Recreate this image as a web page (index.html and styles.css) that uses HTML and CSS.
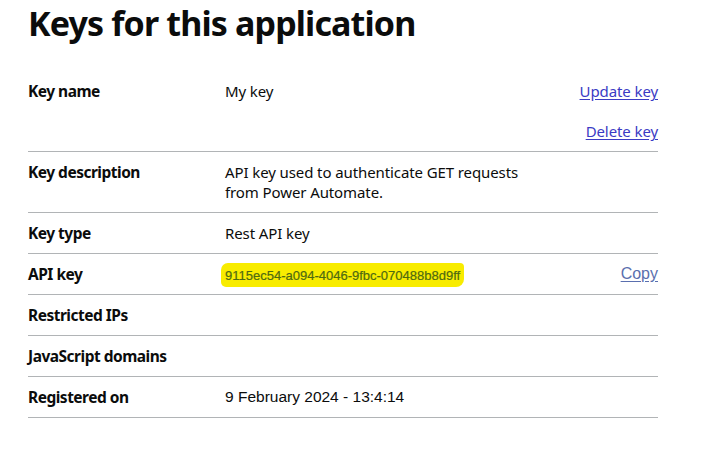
FILE: index.html
```html
<!DOCTYPE html>
<html lang="en">
<head>
<meta charset="utf-8">
<title>Keys for this application</title>
<link rel="stylesheet" href="styles.css">
</head>
<body>
<main class="page">
  <h1 class="title">Keys for this application</h1>
  <dl class="summary">
    <div class="row">
      <dt class="key">Key name</dt>
      <dd class="value">My key</dd>
      <dd class="actions">
        <a class="link" href="#">Update key</a>
        <a class="link" href="#">Delete key</a>
      </dd>
    </div>
    <div class="row">
      <dt class="key">Key description</dt>
      <dd class="value">API key used to authenticate GET requests from Power Automate.</dd>
      <dd class="actions"></dd>
    </div>
    <div class="row">
      <dt class="key">Key type</dt>
      <dd class="value">Rest API key</dd>
      <dd class="actions"></dd>
    </div>
    <div class="row">
      <dt class="key">API key</dt>
      <dd class="value"><span class="apikey">9115ec54-a094-4046-9fbc-070488b8d9ff</span></dd>
      <dd class="actions"><a class="copy" href="#">Copy</a></dd>
    </div>
    <div class="row">
      <dt class="key">Restricted IPs</dt>
      <dd class="value"></dd>
      <dd class="actions"></dd>
    </div>
    <div class="row">
      <dt class="key">JavaScript domains</dt>
      <dd class="value"></dd>
      <dd class="actions"></dd>
    </div>
    <div class="row">
      <dt class="key">Registered on</dt>
      <dd class="value date">9 February 2024 - 13:4:14</dd>
      <dd class="actions"></dd>
    </div>
  </dl>
</main>
</body>
</html>
```

FILE: styles.css
```css
html, body {
  margin: 0;
  padding: 0;
  background: #ffffff;
}

body {
  font-family: "Noto Sans", "Open Sans", Arial, sans-serif;
  color: #0b0c0c;
}

.page {
  padding: 0 50px 0 28px;
  width: 630px;
}

.title {
  margin: 0 0 27px 0;
  padding-top: 2px;
  font-size: 34px;
  line-height: 42px;
  font-weight: 700;
  letter-spacing: -0.85px;
}

.summary {
  margin: 0;
  font-size: 16px;
  line-height: 20px;
}

.row {
  display: grid;
  grid-template-columns: 197px 320px 1fr;
  border-bottom: 1px solid #b1b4b6;
}

.key,
.value,
.actions {
  margin: 0;
  padding: 10px 20px 10px 0;
}

.key {
  font-weight: 700;
  font-size: 15.5px;
  letter-spacing: -0.5px;
}

.value {
  font-size: 15px;
  letter-spacing: -0.1px;
}

.actions {
  padding-right: 0;
  display: flex;
  flex-direction: column;
  align-items: flex-end;
  gap: 20px;
}

.link {
  color: #3b3bc4;
  font-size: 15px;
  letter-spacing: -0.1px;
  text-decoration: underline;
  text-underline-offset: 2px;
}

.copy {
  font-family: "Liberation Sans", Arial, sans-serif;
  color: #5a6fae;
  text-decoration: underline;
  text-underline-offset: 2px;
}

.apikey {
  font-family: "Liberation Sans", Arial, sans-serif;
  font-size: 13px;
  line-height: 13px;
  letter-spacing: 0;
  color: #4e6a12;
  background: #f8ec00;
  padding: 5px 4px 4px;
  margin-left: -4px;
  border-radius: 7px 4px 8px 5px;
  -webkit-text-stroke: 0.2px #4e6a12;
}

.date {
  font-family: "Liberation Sans", Arial, sans-serif;
  font-size: 15.5px;
  letter-spacing: 0;
}
```
